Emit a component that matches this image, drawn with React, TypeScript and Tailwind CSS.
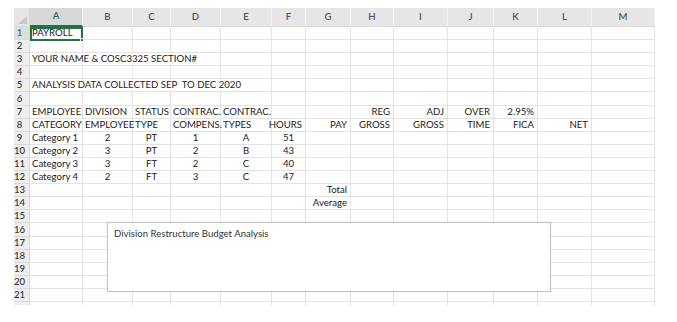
import React from "react";

type Cell = { c: number; t: string; a?: "l" | "c" | "r"; span?: number };

// column letters and pixel widths, row header first
const letters = ["A", "B", "C", "D", "E", "F", "G", "H", "I", "J", "K", "L", "M"];
const gridCols =
  "grid-cols-[16px_53px_50px_38px_50px_51px_34px_45px_43px_54px_46px_44px_54px_63px]";

const sheet: Record<number, Cell[]> = {
  1: [{ c: 0, t: "PAYROLL" }],
  3: [{ c: 0, t: "YOUR NAME & COSC3325 SECTION#", span: 4 }],
  5: [{ c: 0, t: "ANALYSIS DATA COLLECTED SEP\u00a0\u00a0TO DEC 2020", span: 5 }],
  7: [
    { c: 0, t: "EMPLOYEE" },
    { c: 1, t: "DIVISION" },
    { c: 2, t: "STATUS" },
    { c: 3, t: "CONTRAC." },
    { c: 4, t: "CONTRAC." },
    { c: 7, t: "REG", a: "r" },
    { c: 8, t: "ADJ", a: "r" },
    { c: 9, t: "OVER", a: "r" },
    { c: 10, t: "2.95%", a: "r" },
  ],
  8: [
    { c: 0, t: "CATEGORY" },
    { c: 1, t: "EMPLOYEE" },
    { c: 2, t: "TYPE" },
    { c: 3, t: "COMPENS." },
    { c: 4, t: "TYPES" },
    { c: 5, t: "HOURS", a: "r" },
    { c: 6, t: "PAY", a: "r" },
    { c: 7, t: "GROSS", a: "r" },
    { c: 8, t: "GROSS", a: "r" },
    { c: 9, t: "TIME", a: "r" },
    { c: 10, t: "FICA", a: "r" },
    { c: 11, t: "NET", a: "r" },
  ],
  13: [{ c: 6, t: "Total", a: "r" }],
  14: [{ c: 6, t: "Average", a: "r" }],
};

const categories: [string, string, string, string, string, string][] = [
  ["Category 1", "2", "PT", "1", "A", "51"],
  ["Category 2", "3", "PT", "2", "B", "43"],
  ["Category 3", "3", "FT", "2", "C", "40"],
  ["Category 4", "2", "FT", "3", "C", "47"],
];
categories.forEach((row, i) => {
  sheet[9 + i] = row.map((t, c) => ({ c, t, a: c === 0 ? "l" : "c" }));
});

const spanClass: Record<number, string> = {
  1: "col-span-1",
  4: "col-span-4",
  5: "col-span-5",
};
const alignClass = { l: "justify-start pl-[2px]", c: "justify-center", r: "justify-end pr-[3px]" };

function Row({ n, label = true }: { n: number; label?: boolean }) {
  const cells = sheet[n] ?? [];
  const out: React.ReactNode[] = [];
  for (let c = 0; c < letters.length; ) {
    const cell = cells.find((x) => x.c === c);
    const span = cell?.span ?? 1;
    out.push(
      <div
        key={c}
        className={`${spanClass[span]} flex items-end ${alignClass[cell?.a ?? "l"]} border-r border-b border-[#e3e3e3] whitespace-nowrap overflow-visible leading-[12px]`}
      >
        {cell?.t}
      </div>
    );
    c += span;
  }
  return (
    <div className={`grid ${gridCols} h-[13.1px]`}>
      <div
        className={`flex items-end justify-center pr-[4px] leading-[12px] font-medium border-r border-b border-[#d9d9d9] ${
          n === 1 ? "bg-[#dedede] text-[#217346]" : "bg-[#eeeeee] text-[#333]"
        }`}
      >
        {label ? n : null}
      </div>
      {out}
    </div>
  );
}

export default function App() {
  const rows = Array.from({ length: 21 }, (_, i) => i + 1);
  return (
    <div className="w-[677px] h-[322px] bg-white pl-[14px] pt-[8px] font-['Lato','Open_Sans',sans-serif] text-[9.6px] text-[#222]">
      <div className="relative w-[641px] h-[297px] overflow-hidden">
        {/* column letters */}
        <div className={`grid ${gridCols} h-[19px] bg-[#e6e6e6] text-[#555] font-semibold`}>
          <div className="relative border-r border-b border-[#d6d6d6]">
            <svg className="absolute right-[2px] bottom-[2px]" width="9" height="8" viewBox="0 0 9 8">
              <polygon points="9,0 9,8 0,8" fill="#c9c9c9" />
            </svg>
          </div>
          {letters.map((l) => (
            <div
              key={l}
              className={`flex items-center justify-center border-r border-[#f3f3f3] ${
                l === "A"
                  ? "bg-[#d8d8d8] text-[#217346] border-b-2 border-b-[#217346]"
                  : "border-b border-b-[#d6d6d6]"
              }`}
            >
              {l}
            </div>
          ))}
        </div>

        {rows.map((n) => (
          <Row key={n} n={n} />
        ))}
        {/* partly scrolled-in row 22 */}
        <Row n={22} label={false} />

        {/* active cell A1 */}
        <div className="absolute left-[16px] top-[19px] w-[53px] h-[14px] border-2 border-[#217346]">
          <div className="absolute -right-[3px] -bottom-[3px] w-[4px] h-[4px] bg-[#217346] border border-white" />
        </div>

        {/* floating text box */}
        <div className="absolute left-[93px] top-[214px] w-[444px] h-[70px] bg-white border border-[#c4c4c4] shadow-[0_0_1px_rgba(0,0,0,0.15)] px-[6px] pt-[4px] text-[#333]">
          Division Restructure Budget Analysis
        </div>
      </div>
    </div>
  );
}
